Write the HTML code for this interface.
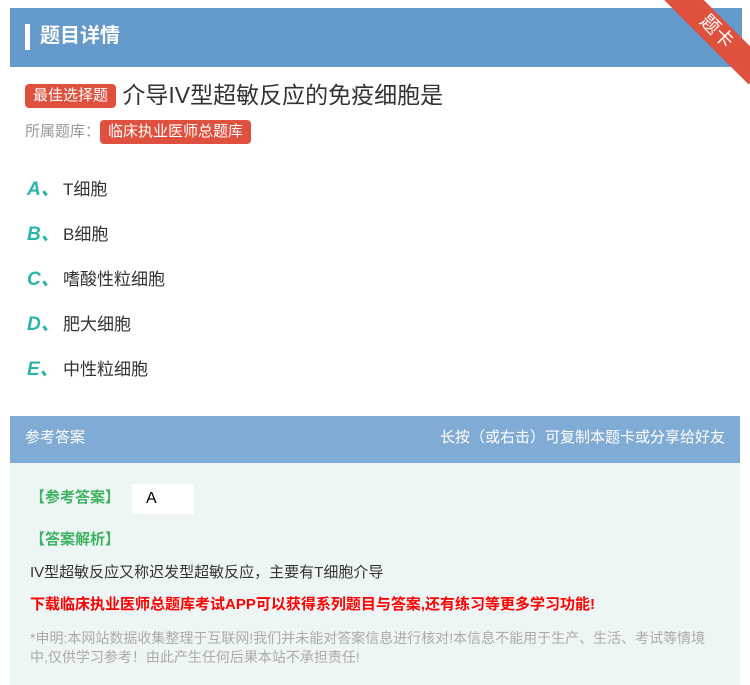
<!DOCTYPE html>
<html><head><meta charset="utf-8"><style>
body{margin:0;width:750px;height:685px;background:#fff;font-family:"Liberation Sans","Noto Sans CJK SC",sans-serif;position:relative;overflow:hidden}
.hdr{position:absolute;left:10px;top:8px;width:732px;height:59px;background:#6499cb}
.hdr .bar{position:absolute;left:15px;top:16px;width:5px;height:26px;background:#fff}
.hdr .t{position:absolute;left:30px;top:13px;color:#fff;font-size:20px;font-weight:bold;line-height:30px}
.rib{position:absolute;right:-26px;top:18px;width:120px;height:28px;background:#e0503f;transform:rotate(45deg);color:#fff;font-size:19px;text-align:center;line-height:28px}
.tag{display:inline-block;background:#e0503f;color:#fff;border-radius:4px;font-size:15px;padding:0 8px;line-height:24px}
.q{position:absolute;left:25px;top:81px;font-size:23px;color:#333;line-height:28px}
.lib{position:absolute;left:25px;top:120px;font-size:15px;color:#999;line-height:24px}
.opt{position:absolute;left:27px;font-size:17px;color:#333}
.opt b{color:#2bb5a8;font-style:italic;font-size:19px;display:inline-block;width:36px}
.ans{position:absolute;left:10px;top:416px;width:730px;height:269px;background:#eef6f5}
.ah{height:47px;background:#80abd5;color:#fff;font-size:15px;line-height:44px;padding:0 15px}
.g{color:#3cb35f;font-weight:bold;font-size:15px;position:absolute}
</style></head><body>
<div class="hdr"><div class="bar"></div><div class="t">题目详情</div></div>
<div class="rib">题卡</div>
<div class="q"><span class="tag" style="font-size:15px;vertical-align:3px">最佳选择题</span> 介导IV型超敏反应的免疫细胞是</div>
<div class="lib">所属题库：<span class="tag">临床执业医师总题库</span></div>
<div class="opt" style="top:174px"><b>A、</b>T细胞</div>
<div class="opt" style="top:219px"><b>B、</b>B细胞</div>
<div class="opt" style="top:264px"><b>C、</b>嗜酸性粒细胞</div>
<div class="opt" style="top:309px"><b>D、</b>肥大细胞</div>
<div class="opt" style="top:354px"><b>E、</b>中性粒细胞</div>
<div class="ans">
<div class="ah"><span>参考答案</span><span style="float:right">长按（或右击）可复制本题卡或分享给好友</span></div>
<div class="g" style="left:20px;top:70px">【参考答案】</div>
<div style="position:absolute;left:122px;top:68px;width:62px;height:30px;background:#fff;font-size:16px;line-height:30px;padding-left:14px;box-sizing:border-box">A</div>
<div class="g" style="left:20px;top:112px">【答案解析】</div>
<div style="position:absolute;left:20px;top:145px;font-size:15px;color:#333">IV型超敏反应又称迟发型超敏反应，主要有T细胞介导</div>
<div style="position:absolute;left:20px;top:177px;font-size:15px;color:#f00;font-weight:bold">下载临床执业医师总题库考试APP可以获得系列题目与答案,还有练习等更多学习功能!</div>
<div style="position:absolute;left:20px;top:213px;width:690px;font-size:14px;color:#aaa;line-height:19px">*申明:本网站数据收集整理于互联网!我们并未能对答案信息进行核对!本信息不能用于生产、生活、考试等情境中,仅供学习参考！由此产生任何后果本站不承担责任!</div>
</div>
</body></html>
